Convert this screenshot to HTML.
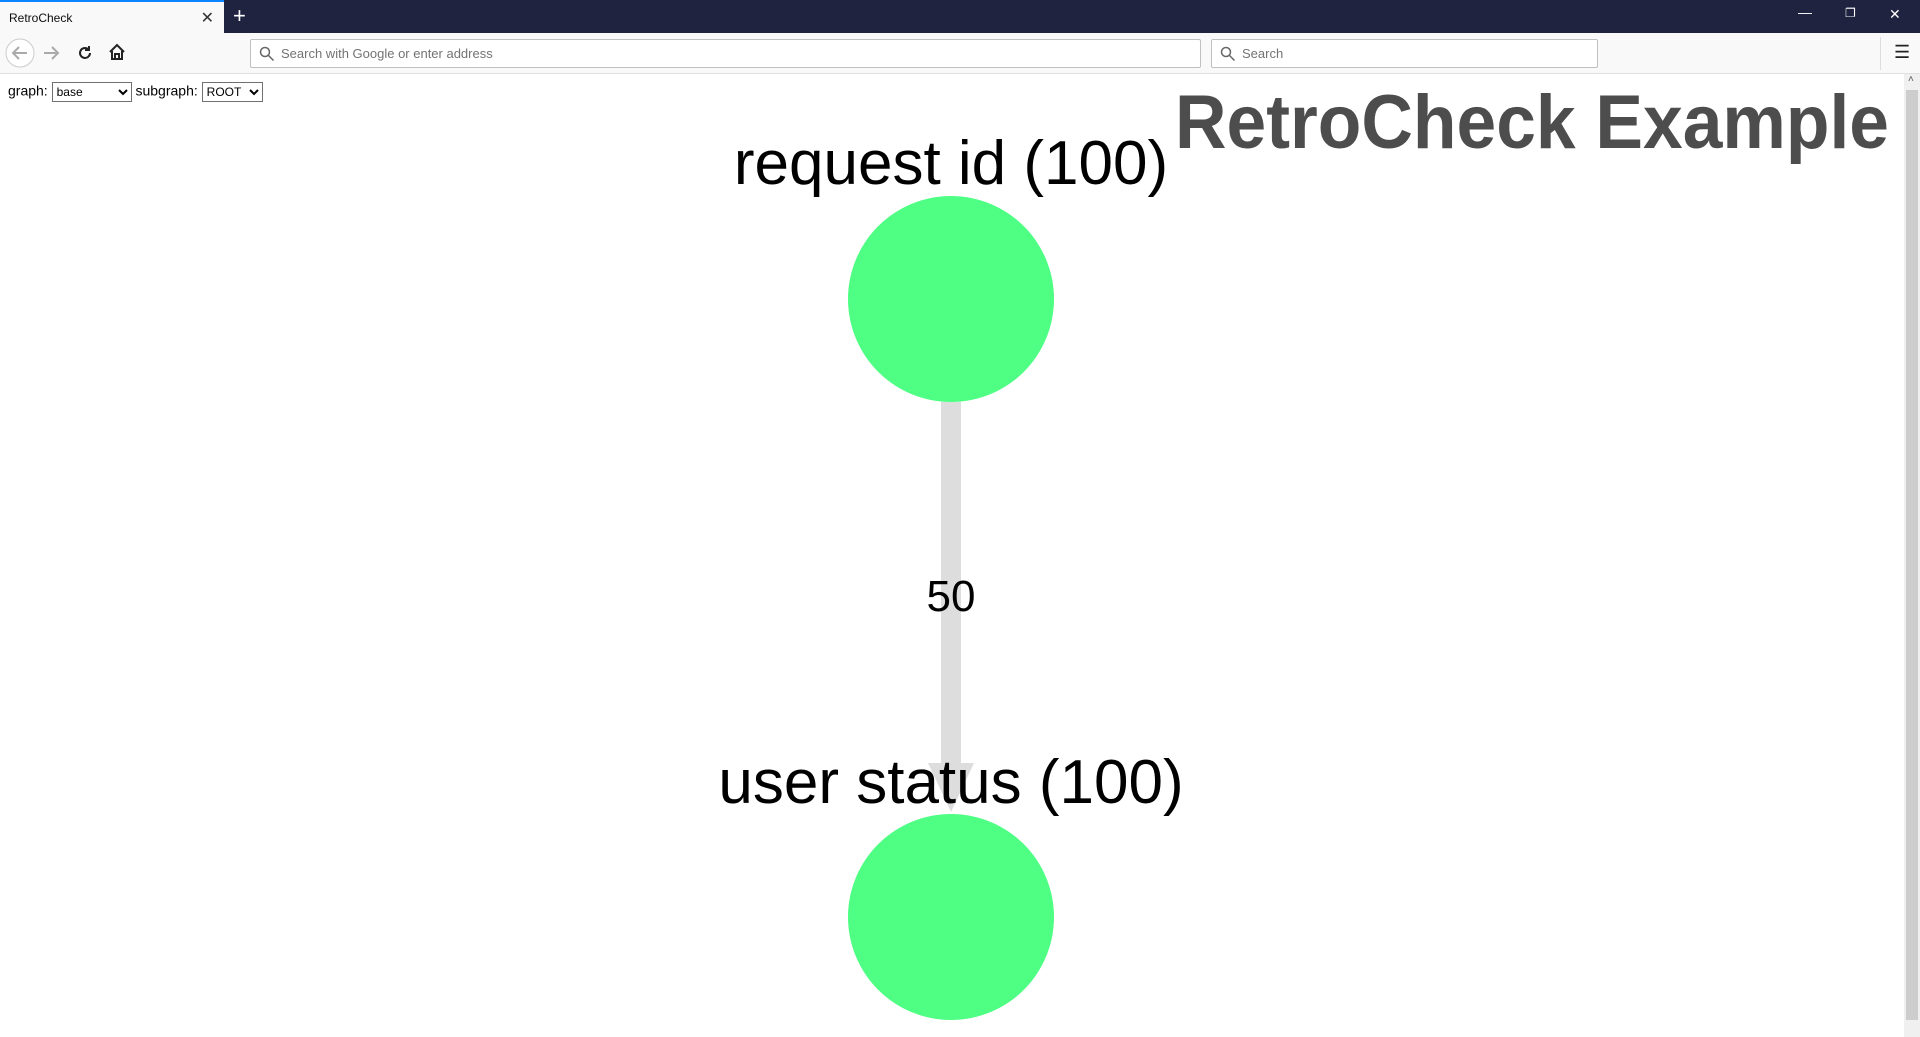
<!DOCTYPE html>
<html><head><meta charset="utf-8"><style>
*{margin:0;padding:0;box-sizing:border-box}
body{width:1920px;height:1037px;overflow:hidden;background:#fff;font-family:"Liberation Sans",Arial,sans-serif;position:relative}
.tabbar{position:absolute;left:0;top:0;width:1920px;height:33px;background:#202340}
.tab{position:absolute;left:0;top:0;width:224px;height:33px;background:#f9f9fa;border-top:2px solid #0a84ff;font-size:12px;color:#0c0c0d;padding:9px 0 0 9px}
.tab .x{position:absolute;right:10px;top:6px;font-size:16px;color:#333}
.plus{position:absolute;left:233px;top:3px;color:#fff;font-size:22px;font-weight:300}
.win{position:absolute;top:6px;color:#fff;font-size:14px}
.nav{position:absolute;left:0;top:33px;width:1920px;height:41px;background:#f9f9fa;border-bottom:1px solid #e0e0e0}
.box{position:absolute;top:6px;height:29px;background:#fff;border:1px solid #c0c0c0;border-radius:2px;font-size:13px;color:#737373;padding:6px 0 0 30px}
.box svg{position:absolute;left:8px;top:6px}
.ctrl{position:absolute;top:82px;left:8px;font-size:14px;color:#000}
select{font-family:"Liberation Sans",Arial,sans-serif;font-size:12px;height:20px;border:1px solid #707070;background:#fff;vertical-align:middle}
.sb{position:absolute;left:1904px;top:74px;width:16px;height:963px;background:#f0f0f0}
.sb .th{position:absolute;left:2px;top:16px;width:12px;height:930px;background:#cdcdcd}
</style></head><body>
<div class="tabbar">
 <div class="tab">RetroCheck<span class="x">✕</span></div>
 <div class="plus">+</div>
 <div class="win" style="left:1798px;top:4px">—</div>
 <div class="win" style="left:1845px;font-size:12px">❐</div>
 <div class="win" style="left:1889px">✕</div>
</div>
<div class="nav">
 <svg style="position:absolute;left:4px;top:4px" width="32" height="32"><circle cx="16" cy="16" r="14" fill="#fff" stroke="#ccc"/><path d="M23 16H9M15 10l-6 6 6 6" stroke="#aaa" stroke-width="2" fill="none"/></svg>
 <svg style="position:absolute;left:42px;top:11px" width="18" height="18"><path d="M2 9h14M10 3l6 6-6 6" stroke="#aaa" stroke-width="2" fill="none"/></svg>
 <svg style="position:absolute;left:76px;top:11px" width="18" height="18"><path d="M14 9a5 5 0 1 1-2-4M13 2v4h-4" stroke="#222" stroke-width="2" fill="none"/></svg>
 <svg style="position:absolute;left:108px;top:10px" width="18" height="18"><path d="M2 9L9 2l7 7M4 8v8h10V8M7 16v-5h4v5" stroke="#222" stroke-width="2" fill="none"/></svg>
 <div class="box" style="left:250px;width:951px"><svg width="16" height="16"><circle cx="6" cy="6" r="4.5" stroke="#666" stroke-width="1.5" fill="none"/><path d="M9.5 9.5l5 5" stroke="#666" stroke-width="1.5"/></svg>Search with Google or enter address</div>
 <div class="box" style="left:1211px;width:387px"><svg width="16" height="16"><circle cx="6" cy="6" r="4.5" stroke="#666" stroke-width="1.5" fill="none"/><path d="M9.5 9.5l5 5" stroke="#666" stroke-width="1.5"/></svg>Search</div>
 <div style="position:absolute;left:1880px;top:4px;width:1px;height:33px;background:#ddd"></div>
 <div style="position:absolute;left:1894px;top:9px;font-size:18px;color:#222">☰</div>
</div>
<div class="ctrl">graph: <select style="width:80px"><option>base</option></select> subgraph: <select style="width:61px"><option>ROOT</option></select></div>
<svg style="position:absolute;left:0;top:0" width="1904" height="1037">
 <rect x="941" y="402" width="20" height="362" fill="#dddddd"/>
 <polygon points="928,763 974,763 951,812" fill="#dddddd"/>
 <circle cx="951" cy="299" r="103" fill="#4eff84"/>
 <circle cx="951" cy="917" r="103" fill="#4eff84"/>
 <text x="951" y="611" font-family="Liberation Sans,Arial,sans-serif" font-size="44" text-anchor="middle" fill="#000">50</text>
 <text x="951" y="184" font-family="Liberation Sans,Arial,sans-serif" font-size="62" text-anchor="middle" fill="#000">request id (100)</text>
 <text x="951" y="803" font-family="Liberation Sans,Arial,sans-serif" font-size="62" text-anchor="middle" fill="#000">user status (100)</text>
 <text x="1175" y="148" font-family="Liberation Sans,Arial,sans-serif" font-weight="bold" font-size="76" fill="#4d4d4d" textLength="714" lengthAdjust="spacingAndGlyphs">RetroCheck Example</text>
</svg>
<div class="sb"><div class="th"></div><div style="position:absolute;left:4px;top:0;font-size:10px;color:#555">˄</div></div>
</body></html>
